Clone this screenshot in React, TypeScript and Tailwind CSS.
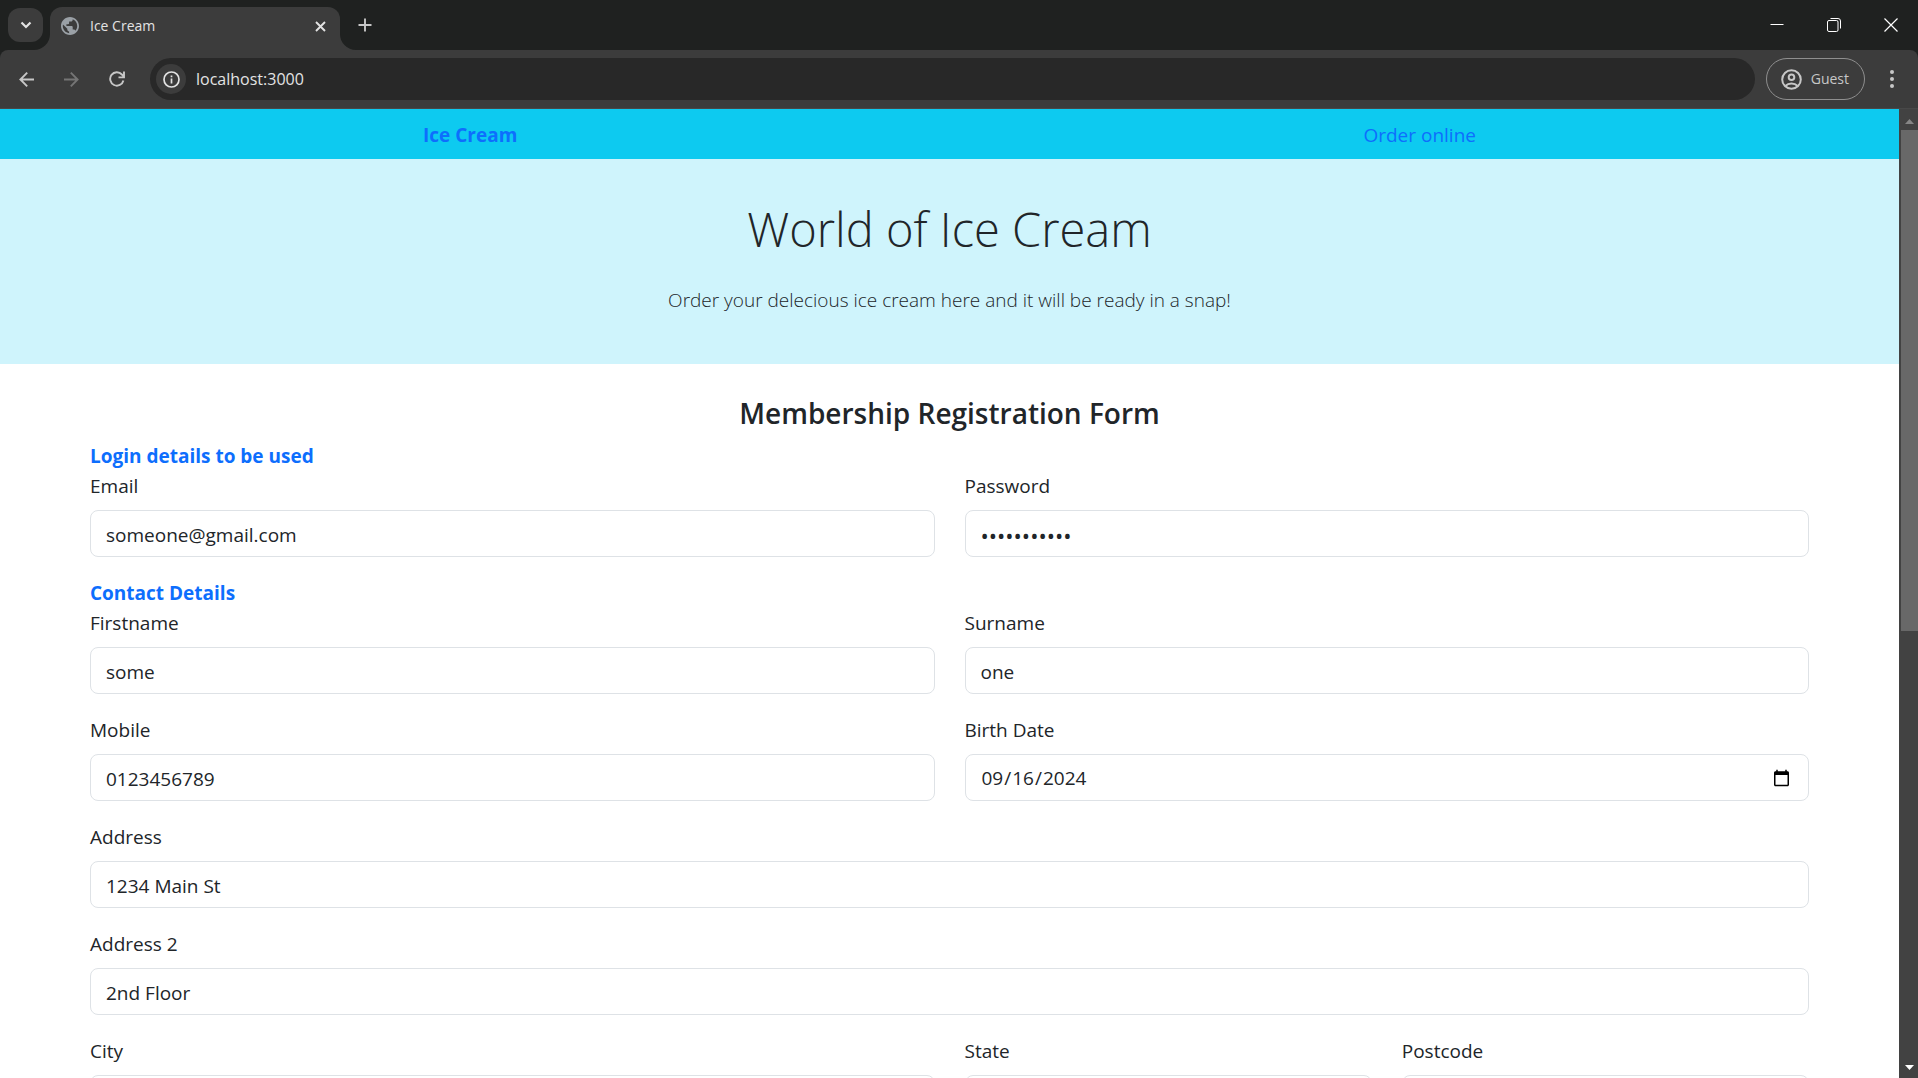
import { useState } from "react";

function ChevronDown() {
  return (
    <svg width="12" height="12" viewBox="0 0 12 12" fill="none" stroke="#e3e3e3" strokeWidth="2.2">
      <path d="M1.500 3.500 6 8l4.500-4.500" />
    </svg>
  );
}

function Globe() {
  return (
    <svg width="18" height="18" viewBox="2 2 20 20" fill="#9aa0a6">
      <path d="M12 2C6.480 2 2 6.480 2 12s4.480 10 10 10 10-4.480 10-10S17.520 2 12 2zm-1 17.930c-3.950-.490-7-3.850-7-7.930 0-.620.080-1.210.210-1.790L9 15v1c0 1.100.900 2 2 2v1.930zm6.900-2.540c-.260-.810-1-1.390-1.900-1.390h-1v-3c0-.550-.450-1-1-1H8v-2h2c.550 0 1-.450 1-1V7h2c1.100 0 2-.900 2-2v-.410c2.930 1.190 5 4.060 5 7.410 0 2.080-.800 3.970-2.100 5.390z" />
    </svg>
  );
}

function TabStrip() {
  return (
    <div className="flex h-[50px] shrink-0 items-end bg-[#1f2120] text-[#e3e3e3]">
      <div className="flex h-[50px] w-[50px] items-start pl-2 pt-2">
        <button
          aria-label="Search tabs"
          className="flex h-[34px] w-[35px] items-center justify-center rounded-xl bg-[#3c3c3c]"
        >
          <ChevronDown />
        </button>
      </div>
      <div className="relative flex h-[43px] w-[290px] items-center rounded-t-xl bg-[#3c3c3c] pb-4 pl-[11px] pr-[13px] pt-[11px]">
        <svg className="absolute -left-4 bottom-0" width="16" height="16" viewBox="0 0 16 16" fill="#3c3c3c">
          <path d="M16 0v16H0A16 16 0 0 0 16 0z" />
        </svg>
        <svg className="absolute -right-4 bottom-0" width="16" height="16" viewBox="0 0 16 16" fill="#3c3c3c">
          <path d="M0 0v16h16A16 16 0 0 1 0 0z" />
        </svg>
        <Globe />
        <span className="ml-[11px] flex-1 text-sm">Ice Cream</span>
        <button aria-label="Close tab" className="p-px">
          <svg width="11" height="11" viewBox="0 0 11 11" stroke="#e3e3e3" strokeWidth="1.900">
            <path d="m1 1 9 9M10 1l-9 9" />
          </svg>
        </button>
      </div>
      <button aria-label="New tab" className="mb-[18px] ml-[18px]">
        <svg width="14" height="14" viewBox="0 0 14 14" stroke="#c7c7c7" strokeWidth="1.900">
          <path d="M7 0.500v13M0.500 7h13" />
        </svg>
      </button>
      <div className="ml-auto mb-[18px] flex items-center gap-[43px] pr-5">
        <button aria-label="Minimize">
          <svg width="14" height="14" viewBox="0 0 14 14" stroke="#fff" strokeWidth="1">
            <path d="M0.500 6.500h13" />
          </svg>
        </button>
        <button aria-label="Restore">
          <svg width="14" height="14" viewBox="0 0 14 14" fill="none" stroke="#fff" strokeWidth="1">
            <rect x="0.500" y="2.500" width="10.500" height="11" rx="1.500" />
            <path d="M3.500 0.500h7.500a2.500 2.500 0 0 1 2.500 2.500v7.500" />
          </svg>
        </button>
        <button aria-label="Close window">
          <svg width="14" height="14" viewBox="0 0 14 14" stroke="#fff" strokeWidth="1.200">
            <path d="m0.500 0.500 13 13M13.500 0.500l-13 13" />
          </svg>
        </button>
      </div>
    </div>
  );
}

function Toolbar() {
  return (
    <div className="shrink-0 bg-[#1f2120]">
      <div className="flex h-[59px] items-center rounded-t-lg border-b border-[#484848] bg-[#3c3c3c] px-[19px] text-[#c7c7c7]">
        <button aria-label="Back">
          <svg width="15" height="15" viewBox="0 0 15 15" fill="none" stroke="#c7c7c7" strokeWidth="1.900">
            <path d="M15 7.500H1.500M8.200.700 1.400 7.500l6.800 6.800" />
          </svg>
        </button>
        <button aria-label="Forward" className="ml-[30px]" disabled>
          <svg width="15" height="15" viewBox="0 0 15 15" fill="none" stroke="#757575" strokeWidth="1.900">
            <path d="M0 7.500h13.500M6.800.700l6.800 6.800-6.800 6.800" />
          </svg>
        </button>
        <button aria-label="Reload" className="ml-[30px]">
          <svg width="16" height="16" viewBox="0 0 16 16" fill="none" stroke="#c7c7c7" strokeWidth="1.900">
            <path d="M14.400 9.500A6.700 6.700 0 1 1 12.900 3.500L15 5.700M15 .5v5.900H9.500" />
          </svg>
        </button>
        <div className="ml-[25px] flex h-[42px] flex-1 items-center rounded-full bg-[#282828] pl-[6px]">
          <button
            aria-label="View site information"
            className="flex size-[30px] items-center justify-center rounded-full bg-[#3c3c3c]"
          >
            <svg width="17" height="17" viewBox="0 0 17 17" fill="none" stroke="#e3e3e3" strokeWidth="1.700">
              <circle cx="8.500" cy="8.500" r="7.500" />
              <path d="M8.500 7.500v5M8.500 4.500v1.700" />
            </svg>
          </button>
          <input
            aria-label="Address"
            defaultValue="localhost:3000"
            className="ml-[10px] flex-1 bg-transparent text-base text-[#e3e3e3] outline-none"
          />
        </div>
        <button className="ml-[11px] flex h-[42px] items-center gap-[9px] rounded-full border border-[#8f8f8f] pl-[14px] pr-[15px] text-sm">
          <svg width="21" height="21" viewBox="0 0 21 21" fill="none" stroke="#c7c7c7" strokeWidth="2">
            <circle cx="10.500" cy="10.500" r="9.300" />
            <circle cx="10.500" cy="8.300" r="2.800" />
            <path d="M4.300 17c1.700-1.600 3.800-2.400 6.200-2.400s4.500.8 6.200 2.400" />
          </svg>
          Guest
        </button>
        <button aria-label="Menu" className="ml-5">
          <svg width="14" height="18" viewBox="0 0 14 18" fill="#c7c7c7">
            <circle cx="7" cy="2" r="2" />
            <circle cx="7" cy="9" r="2" />
            <circle cx="7" cy="16" r="2" />
          </svg>
        </button>
      </div>
    </div>
  );
}

function Scrollbar() {
  return (
    <div className="flex w-[19px] shrink-0 flex-col bg-[#424242] pl-[2px]">
      <div className="flex h-[21px] items-center justify-center pt-1">
        <svg width="9" height="5" viewBox="0 0 9 5" fill="#868686">
          <path d="M0 5 4.500 0 9 5z" />
        </svg>
      </div>
      <div className="flex-1">
        <div className="h-[54%] bg-[#686868]" />
      </div>
      <div className="flex h-[21px] items-center justify-center">
        <svg width="9" height="5" viewBox="0 0 9 5" fill="#fff">
          <path d="M0 0l4.500 5L9 0z" />
        </svg>
      </div>
    </div>
  );
}

type FieldProps = { id: string; label: string; type?: string; value?: string; wide?: string };

function Field({ id, label, type = "text", value = "", wide = "col-span-2" }: FieldProps) {
  const [text, setText] = useState(value);
  return (
    <div className={wide}>
      <label htmlFor={id} className="mb-[9px] block w-fit leading-[30px]">
        {label}
      </label>
      <input
        id={id}
        type={type}
        value={text}
        onChange={(e) => setText(e.target.value)}
        className={`block h-[47px] w-full rounded-lg border border-[#dee2e6] bg-white px-[15px] pt-[2px] ${
          type === "password" ? "text-[22px]" : ""
        }`}
      />
    </div>
  );
}

export default function App() {
  return (
    <div className="flex h-screen flex-col overflow-hidden bg-white font-['Open_Sans','Noto_Sans',sans-serif]">
      <TabStrip />
      <Toolbar />
      <div className="flex min-h-0 flex-1">
        <main className="min-w-0 flex-1 overflow-hidden text-[19px] text-[#212529]">
          <nav className="flex h-[50px] items-center justify-around bg-[#0dcaf0] pt-[2px] text-[#0d6efd]">
            <a href="#home" className="font-bold">Ice Cream</a>
            <a href="#order">Order online</a>
          </nav>
          <header className="flex h-[205px] flex-col items-center bg-[#cff4fc] pt-10 font-light">
            <h1 className="text-[47px] leading-[60px]">World of Ice Cream</h1>
            <p className="mt-[26px] leading-[30px]">Order your delecious ice cream here and it will be ready in a snap!</p>
          </header>
          <form className="px-[90px] pt-[31px]">
            <h4 className="mb-[10px] text-center text-[28px] font-semibold leading-9">Membership Registration Form</h4>
            <h6 className="font-bold leading-[30px] text-[#0d6efd]">Login details to be used</h6>
            <div className="grid grid-cols-4 gap-x-[30px] gap-y-[21px]">
              <Field id="email" label="Email" type="email" value="someone@gmail.com" />
              <Field id="password" label="Password" type="password" value="someone1234" />
            </div>
            <h6 className="mt-[21px] font-bold leading-[30px] text-[#0d6efd]">Contact Details</h6>
            <div className="grid grid-cols-4 gap-x-[30px] gap-y-[21px]">
              <Field id="firstname" label="Firstname" value="some" />
              <Field id="surname" label="Surname" value="one" />
              <Field id="mobile" label="Mobile" type="tel" value="0123456789" />
              <Field id="birth" label="Birth Date" type="date" value="2024-09-16" />
              <Field id="address" label="Address" value="1234 Main St" wide="col-span-4" />
              <Field id="address2" label="Address 2" value="2nd Floor" wide="col-span-4" />
              <Field id="city" label="City" />
              <Field id="state" label="State" wide="col-span-1" />
              <Field id="postcode" label="Postcode" wide="col-span-1" />
            </div>
          </form>
        </main>
        <Scrollbar />
      </div>
    </div>
  );
}
